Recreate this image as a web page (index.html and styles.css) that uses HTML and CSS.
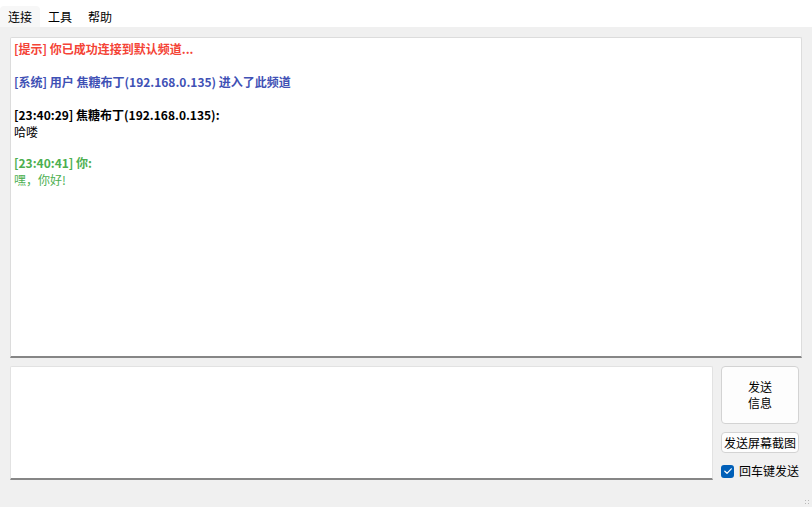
FILE: index.html
```html
<!DOCTYPE html>
<html lang="zh">
<head>
<meta charset="utf-8">
<title>聊天</title>
<link rel="stylesheet" href="styles.css">
</head>
<body>
<div class="window">
  <div class="menubar">
    <span class="menu-item active">连接</span>
    <span class="menu-item">工具</span>
    <span class="menu-item">帮助</span>
  </div>
  <div class="content">
    <div class="chat">
      <div class="line b red">[提示] 你已成功连接到默认频道...</div>
      <div class="line">&nbsp;</div>
      <div class="line b blue">[系统] 用户 焦糖布丁(192.168.0.135) 进入了此频道</div>
      <div class="line">&nbsp;</div>
      <div class="line b">[23:40:29] 焦糖布丁(192.168.0.135):</div>
      <div class="line">哈喽</div>
      <div class="line short">&nbsp;</div>
      <div class="line b green">[23:40:41] 你:</div>
      <div class="line green">嘿，你好!</div>
    </div>
    <div class="bottom">
      <div class="input"></div>
      <div class="side">
        <button class="btn big">发送<br>信息</button>
        <button class="btn small">发送屏幕截图</button>
        <label class="check"><span class="box"><svg width="10" height="10" viewBox="0 0 10 10"><path d="M1.8 5.2 L4 7.3 L8.3 2.8" fill="none" stroke="#fff" stroke-width="1.2" stroke-linecap="round" stroke-linejoin="round"/></svg></span>回车键发送</label>
      </div>
    </div>
  </div>
  <div class="grip"></div>
</div>
</body>
</html>
```
FILE: styles.css
```css
html, body {
  margin: 0;
  padding: 0;
}
body {
  font-family: "Noto Sans CJK SC", "Noto Sans", sans-serif;
  font-size: 12px;
  color: #000;
  background: #f0f0f0;
}
.window {
  width: 812px;
  height: 507px;
  display: flex;
  flex-direction: column;
  position: relative;
  overflow: hidden;
}
.menubar {
  height: 27px;
  flex: none;
  background: #fff;
  display: flex;
  align-items: flex-end;
}
.menu-item {
  height: 21px;
  line-height: 21px;
  padding: 0 8px;
  border-radius: 4px 4px 0 0;
}
.menu-item.active {
  background: #f7f7f7;
}
.content {
  flex: 1;
  display: flex;
  flex-direction: column;
  padding: 10px 10px 27px 10px;
  gap: 8px;
}
.chat {
  height: 321px;
  flex: none;
  background: #fff;
  border: 1px solid #dcdcdc;
  border-bottom: 2px solid #868686;
  border-radius: 2px 2px 0 0;
  padding: 3px 3px;
  box-sizing: border-box;
  width: 792px;
}
.line {
  line-height: 16.6px;
  height: 16.6px;
  white-space: nowrap;
}
.line.short {
  height: 14.6px;
}
.b { font-weight: bold; }
.red { color: #f44336; }
.blue { color: #3f51b5; }
.green { color: #4caf50; }
.bottom {
  display: flex;
  gap: 8px;
  height: 114px;
  flex: none;
}
.input {
  width: 703px;
  background: #fff;
  border: 1px solid #e2e2e2;
  border-bottom: 2px solid #868686;
  box-sizing: border-box;
  border-radius: 2px 2px 0 0;
}
.side {
  width: 78px;
  display: flex;
  flex-direction: column;
}
.btn {
  font-family: inherit;
  font-size: 12px;
  background: #fdfdfd;
  border: 1px solid #d3d3d3;
  border-radius: 4px;
  color: #000;
  padding: 0;
  width: 78px;
  box-sizing: border-box;
}
.btn.big {
  height: 58px;
  line-height: 16px;
}
.btn.small {
  height: 21px;
  margin-top: 8px;
  line-height: 19px;
  white-space: nowrap;
}
.check {
  margin-top: 11px;
  display: flex;
  align-items: center;
  gap: 5px;
  line-height: 14px;
  white-space: nowrap;
}
.box {
  width: 13px;
  height: 13px;
  flex: none;
  border-radius: 3px;
  background: #005fb8;
  display: flex;
  align-items: center;
  justify-content: center;
}
.grip {
  position: absolute;
  right: 2px;
  bottom: 2px;
  width: 6px;
  height: 6px;
  background:
    radial-gradient(circle, #b8b8b8 0.8px, transparent 1px) 0 0 / 3px 3px;
}
```
